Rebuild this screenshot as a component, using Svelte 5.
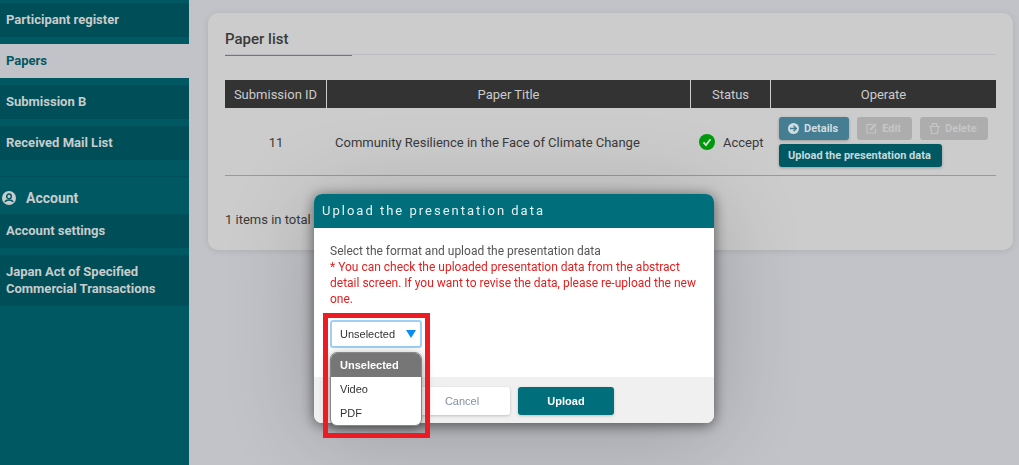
<script lang="ts">
	const menu = [
		{ label: "Participant register", active: false },
		{ label: "Papers", active: true },
		{ label: "Submission B", active: false },
		{ label: "Received Mail List", active: false },
	];

	const account = ["Account settings", "Japan Act of Specified Commercial Transactions"];

	const papers = [
		{
			id: 11,
			title: "Community Resilience in the Face of Climate Change",
			status: "Accept",
		},
	];

	const formats = ["Unselected", "Video", "PDF"];
	let format = $state("Unselected");
</script>

<div class="page">
	<nav class="sidebar">
		<ul>
			{#each menu as item}
				<li><a href="#top" class:active={item.active}>{item.label}</a></li>
			{/each}
		</ul>
		<h2 class="account">
			<svg width="14" height="14" viewBox="0 0 14 14" aria-hidden="true">
				<circle cx="7" cy="7" r="7" fill="#c8cccc" />
				<circle cx="7" cy="5.4" r="2.3" fill="none" stroke="#005962" stroke-width="1.5" />
				<path d="M2.8 11c.8-1.600 2.400-2 4.200-2s3.400.4 4.200 2" fill="none" stroke="#005962" stroke-width="1.5" />
			</svg>
			Account
		</h2>
		<ul>
			{#each account as label}
				<li><a href="#top">{label}</a></li>
			{/each}
		</ul>
	</nav>

	<main>
		<section class="card">
			<h1><span>Paper list</span></h1>
			<table>
				<thead>
					<tr>
						<th class="id">Submission ID</th>
						<th>Paper Title</th>
						<th class="status">Status</th>
						<th class="operate">Operate</th>
					</tr>
				</thead>
				<tbody>
					{#each papers as paper}
						<tr>
							<td class="center">{paper.id}</td>
							<td>{paper.title}</td>
							<td>
								<div class="state">
									<svg width="16" height="16" viewBox="0 0 16 16" aria-hidden="true">
										<circle cx="8" cy="8" r="8" fill="#009a0c" />
										<path d="M4.5 8.3l2.5 2.7 4.5-5.8" fill="none" stroke="#d4e4d4" stroke-width="1.8" />
									</svg>
									{paper.status}
								</div>
							</td>
							<td>
								<div class="actions">
									<button class="small details">
										<svg width="11" height="11" viewBox="0 0 11 11" aria-hidden="true">
											<circle cx="5.5" cy="5.5" r="5.5" fill="#cfdde2" />
											<path d="M2 5.5h6M5.6 2.8l2.700 2.700-2.700 2.700" fill="none" stroke="#457d93" stroke-width="1.4" />
										</svg>
										Details
									</button>
									<button class="small" disabled>
										<svg width="11" height="11" viewBox="0 0 11 11" aria-hidden="true">
											<path d="M7 1.5H1v8.500h8.500V6" fill="none" stroke="currentColor" stroke-width="1.2" />
											<path d="M3.500 7.700l.5-2L9 .6l1.500 1.500-5 5z" fill="currentColor" />
										</svg>
										Edit
									</button>
									<button class="small" disabled>
										<svg width="11" height="11" viewBox="0 0 11 11" aria-hidden="true">
											<path d="M0 3.500h11M1.600 3.500l1 7h5.800l1-7M3 3.500l.6-2.800h3.800l.6 2.800" fill="none" stroke="currentColor" stroke-width="1.2" />
										</svg>
										Delete
									</button>
									<button class="small upload">Upload the presentation data</button>
								</div>
							</td>
						</tr>
					{/each}
				</tbody>
			</table>
			<p>{papers.length} items in total</p>
		</section>
	</main>
</div>

<div class="overlay">
	<div class="modal" role="dialog" aria-labelledby="modal-title">
		<h2 id="modal-title">Upload the presentation data</h2>
		<div class="body">
			<label for="format">Select the format and upload the presentation data</label>
			<p class="note">
				* You can check the uploaded presentation data from the abstract detail screen. If you want to
				revise the data, please re-upload the new one.
			</p>
			<div class="picker">
				<select id="format" bind:value={format}>
					{#each formats as name}
						<option>{name}</option>
					{/each}
				</select>
				<svg class="arrow" width="10" height="8" viewBox="0 0 10 8" aria-hidden="true">
					<path d="M0 0h10L5 8z" fill="#0a8cf5" />
				</svg>
				<ul class="options" role="listbox" aria-label="Format">
					{#each formats as name}
						<li role="option" aria-selected={name === format} class:selected={name === format}>{name}</li>
					{/each}
				</ul>
				<div class="marker"></div>
			</div>
		</div>
		<footer>
			<button class="cancel">Cancel</button>
			<button class="submit">Upload</button>
		</footer>
	</div>
</div>

<style>
	:global(body) {
		margin: 0;
		background: #c2c3c8;
		font-family: Roboto, "Liberation Sans", sans-serif;
		font-size: 13px;
		color: #3a3a3a;
	}

	ul,
	h1,
	h2,
	p {
		margin: 0;
		padding: 0;
		list-style: none;
	}

	svg {
		flex: none;
	}

	.page {
		display: flex;
		min-height: 100vh;
	}

	.sidebar {
		flex: none;
		box-sizing: border-box;
		width: 189px;
		padding-top: 3px;
		background: #005962;
	}

	.sidebar ul {
		display: flex;
		flex-direction: column;
		gap: 7px;
	}

	.sidebar a {
		display: block;
		padding: 8px 16px 9px 6px;
		background: #004e57;
		color: #c8cccc;
		font-size: 13px;
		font-weight: bold;
		line-height: 17px;
		text-decoration: none;
	}

	.sidebar a.active {
		background: #c2c3c8;
		color: #005962;
	}

	.account {
		display: flex;
		align-items: center;
		gap: 10px;
		margin-top: 16px;
		padding: 11px 2px 6px;
		border-top: 1px solid #005059;
		color: #c8cccc;
		font-size: 14px;
		line-height: 20px;
	}

	main {
		flex: 1;
		min-width: 0;
		padding: 13px 6px 13px 19px;
	}

	.card {
		padding: 16px 17px 20px;
		border-radius: 10px;
		background: #ccc;
		box-shadow: 0 1px 6px rgba(0, 0, 0, 0.1);
	}

	h1 {
		border-bottom: 1px solid #bcbcc0;
		font-size: 15px;
		font-weight: 500;
		line-height: 20px;
	}

	h1 span {
		display: block;
		width: 127px;
		padding-bottom: 6px;
		margin-bottom: -2px;
		border-bottom: 1px solid #6c7494;
	}

	table {
		width: 100%;
		margin-top: 25px;
		border-spacing: 0;
		table-layout: fixed;
	}

	th {
		box-sizing: border-box;
		height: 28px;
		padding: 0;
		border-right: 1px solid #ccc;
		background: #333;
		color: #ccc;
		font-weight: normal;
		white-space: nowrap;
	}

	th:last-child {
		border-right: 0;
	}

	.id {
		width: 102px;
	}

	.status {
		width: 80px;
	}

	.operate {
		width: 225px;
	}

	td {
		padding: 9px 8px 8px;
		border-bottom: 1px solid #999;
	}

	.center {
		text-align: center;
	}

	.state {
		display: flex;
		align-items: center;
		gap: 8px;
	}

	.card p {
		margin-top: 34px;
		line-height: 20px;
	}

	.actions {
		display: flex;
		flex-wrap: wrap;
		gap: 4px 8px;
	}

	button {
		border: 0;
		border-radius: 3px;
		font-family: inherit;
		font-size: 11px;
		font-weight: bold;
	}

	.small {
		display: flex;
		align-items: center;
		gap: 5px;
		height: 23px;
		padding: 0 11px 0 9px;
		background: #adadad;
		color: #c6c6c6;
		white-space: nowrap;
	}

	.details {
		background: #457d93;
		color: #cfdde2;
		box-shadow: 0 1px 3px rgba(0, 0, 0, 0.25);
	}

	.upload {
		background: #005962;
		color: #c8d8da;
		box-shadow: 0 1px 3px rgba(0, 0, 0, 0.25);
	}

	.overlay {
		position: fixed;
		inset: 0;
		display: flex;
		justify-content: center;
		align-items: flex-start;
		padding: 194px 0 0 9px;
	}

	.modal {
		width: 400px;
		border-radius: 8px;
		background: #fff;
		box-shadow:
			0 2px 14px rgba(0, 0, 0, 0.55),
			0 10px 90px rgba(0, 0, 0, 0.2);
	}

	.modal h2 {
		padding: 0 8px;
		border-radius: 8px 8px 0 0;
		background: #006f7b;
		color: #e6f1f2;
		font-size: 13px;
		font-weight: normal;
		letter-spacing: 2px;
		line-height: 34px;
	}

	.body {
		padding: 15px 16px 29px;
		font-size: 12px;
		line-height: 16px;
	}

	.body label {
		display: block;
		color: #555;
	}

	.note {
		color: #e02020;
	}

	.picker {
		position: relative;
		width: 92px;
		margin-top: 13px;
		font-family: "Liberation Sans", Arial, sans-serif;
		font-size: 11px;
		color: #333;
	}

	select {
		display: block;
		appearance: none;
		box-sizing: border-box;
		width: 100%;
		height: 28px;
		padding: 0 20px 0 8px;
		border: 2px solid #9fd0f8;
		border-radius: 3px;
		background: #fff;
		color: #333;
		font: inherit;
	}

	.arrow {
		position: absolute;
		top: 10px;
		right: 6px;
		pointer-events: none;
	}

	.options {
		position: absolute;
		top: 32px;
		left: 0;
		right: 0;
		border: 1px solid #888;
		border-radius: 7px;
		background: #fff;
		box-shadow: 0 3px 12px rgba(0, 0, 0, 0.4);
		overflow: hidden;
	}

	.options li {
		padding: 0 9px;
		line-height: 24px;
	}

	.options .selected {
		background: #767676;
		color: #fff;
		font-weight: bold;
	}

	/* frame around the format picker and its open list */
	.marker {
		position: absolute;
		top: -7px;
		left: -7px;
		right: -8px;
		height: 115px;
		border: 5px solid #ed1c24;
		pointer-events: none;
	}

	footer {
		display: flex;
		justify-content: center;
		gap: 8px;
		padding: 10px 0 8px;
		border-radius: 0 0 8px 8px;
		background: #f0f0f0;
	}

	footer button {
		width: 96px;
		height: 28px;
		padding: 0;
		font-family: "Liberation Sans", Arial, sans-serif;
		font-size: 11px;
		box-shadow: 0 1px 3px rgba(0, 0, 0, 0.2);
	}

	.cancel {
		background: #fff;
		color: #8390a2;
		font-weight: normal;
	}

	.submit {
		background: #006f7b;
		color: #fff;
	}
</style>
